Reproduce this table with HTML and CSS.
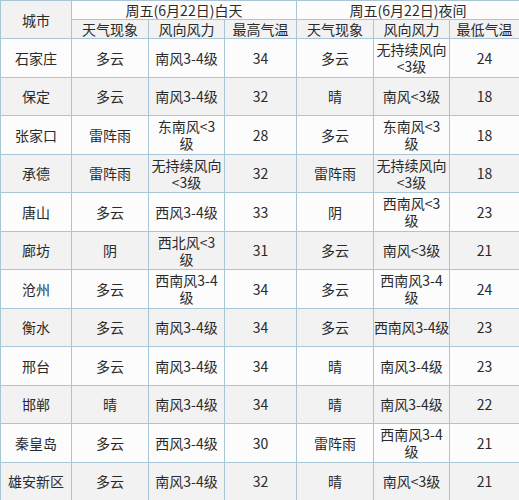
FILE: index.html
```html
<!DOCTYPE html>
<html lang="zh">
<head>
<meta charset="utf-8">
<link rel="stylesheet" href="styles.css">
</head>
<body>
<table class="wx">
  <colgroup>
    <col class="c1"><col class="c2"><col class="c3"><col class="c4"><col class="c5"><col class="c6"><col class="c7">
  </colgroup>
  <thead>
    <tr class="h1">
      <th rowspan="2" class="city-h">城市</th>
      <th colspan="3">周五(6月22日)白天</th>
      <th colspan="3">周五(6月22日)夜间</th>
    </tr>
    <tr class="h2">
      <th>天气现象</th><th>风向风力</th><th>最高气温</th>
      <th>天气现象</th><th>风向风力</th><th>最低气温</th>
    </tr>
  </thead>
  <tbody>
    <tr class="w"><td>石家庄</td><td>多云</td><td>南风3-4级</td><td>34</td><td>多云</td><td>无持续风向&lt;3级</td><td>24</td></tr>
    <tr class="g"><td>保定</td><td>多云</td><td>南风3-4级</td><td>32</td><td>晴</td><td>南风&lt;3级</td><td>18</td></tr>
    <tr class="w"><td>张家口</td><td>雷阵雨</td><td>东南风&lt;3级</td><td>28</td><td>多云</td><td>东南风&lt;3级</td><td>18</td></tr>
    <tr class="g"><td>承德</td><td>雷阵雨</td><td>无持续风向&lt;3级</td><td>32</td><td>雷阵雨</td><td>无持续风向&lt;3级</td><td>18</td></tr>
    <tr class="w"><td>唐山</td><td>多云</td><td>西风3-4级</td><td>33</td><td>阴</td><td>西南风&lt;3级</td><td>23</td></tr>
    <tr class="g"><td>廊坊</td><td>阴</td><td>西北风&lt;3级</td><td>31</td><td>多云</td><td>南风&lt;3级</td><td>21</td></tr>
    <tr class="w"><td>沧州</td><td>多云</td><td>西南风3-4级</td><td>34</td><td>多云</td><td>西南风3-4级</td><td>24</td></tr>
    <tr class="g"><td>衡水</td><td>多云</td><td>南风3-4级</td><td>34</td><td>多云</td><td class="nowrap">西南风3-4级</td><td>23</td></tr>
    <tr class="w"><td>邢台</td><td>多云</td><td>南风3-4级</td><td>34</td><td>晴</td><td>南风3-4级</td><td>23</td></tr>
    <tr class="g"><td>邯郸</td><td>晴</td><td>南风3-4级</td><td>34</td><td>晴</td><td>南风3-4级</td><td>22</td></tr>
    <tr class="w"><td>秦皇岛</td><td>多云</td><td>西风3-4级</td><td>30</td><td>雷阵雨</td><td>西南风3-4级</td><td>21</td></tr>
    <tr class="g"><td>雄安新区</td><td>多云</td><td>南风3-4级</td><td>32</td><td>晴</td><td>南风&lt;3级</td><td>21</td></tr>
  </tbody>
</table>
</body>
</html>
```
FILE: styles.css
```css
html, body {
  margin: 0;
  padding: 0;
  background: #ffffff;
}
.wx {
  border-collapse: collapse;
  table-layout: fixed;
  width: 519px;
  font-family: "Noto Sans CJK SC", "Noto Sans", sans-serif;
  font-size: 14px;
  color: #2a2a2a;
}
.c1 { width: 71px; }
.c2 { width: 77px; }
.c3 { width: 76px; }
.c4 { width: 72px; }
.c5 { width: 77px; }
.c6 { width: 76px; }
.c7 { width: 70px; }
.wx th, .wx td {
  border: 1px solid #aac6d6;
  text-align: center;
  font-weight: normal;
  line-height: 17px;
  overflow: hidden;
}
.wx th {
  height: 18px;
  padding: 0 2px;
  line-height: 18px;
}
.h1 th { background: #fcfcfc; }
.h2 th, .wx .city-h { background: #f2f2f3; }
.wx td {
  height: 36.5px;
  padding: 1px 2px 0;
}
.wx td.nowrap {
  white-space: nowrap;
  padding: 1px 0 0;
  letter-spacing: -0.2px;
}
.w td { background: #fcfcfc; }
.g td { background: #f2f2f3; }
```
